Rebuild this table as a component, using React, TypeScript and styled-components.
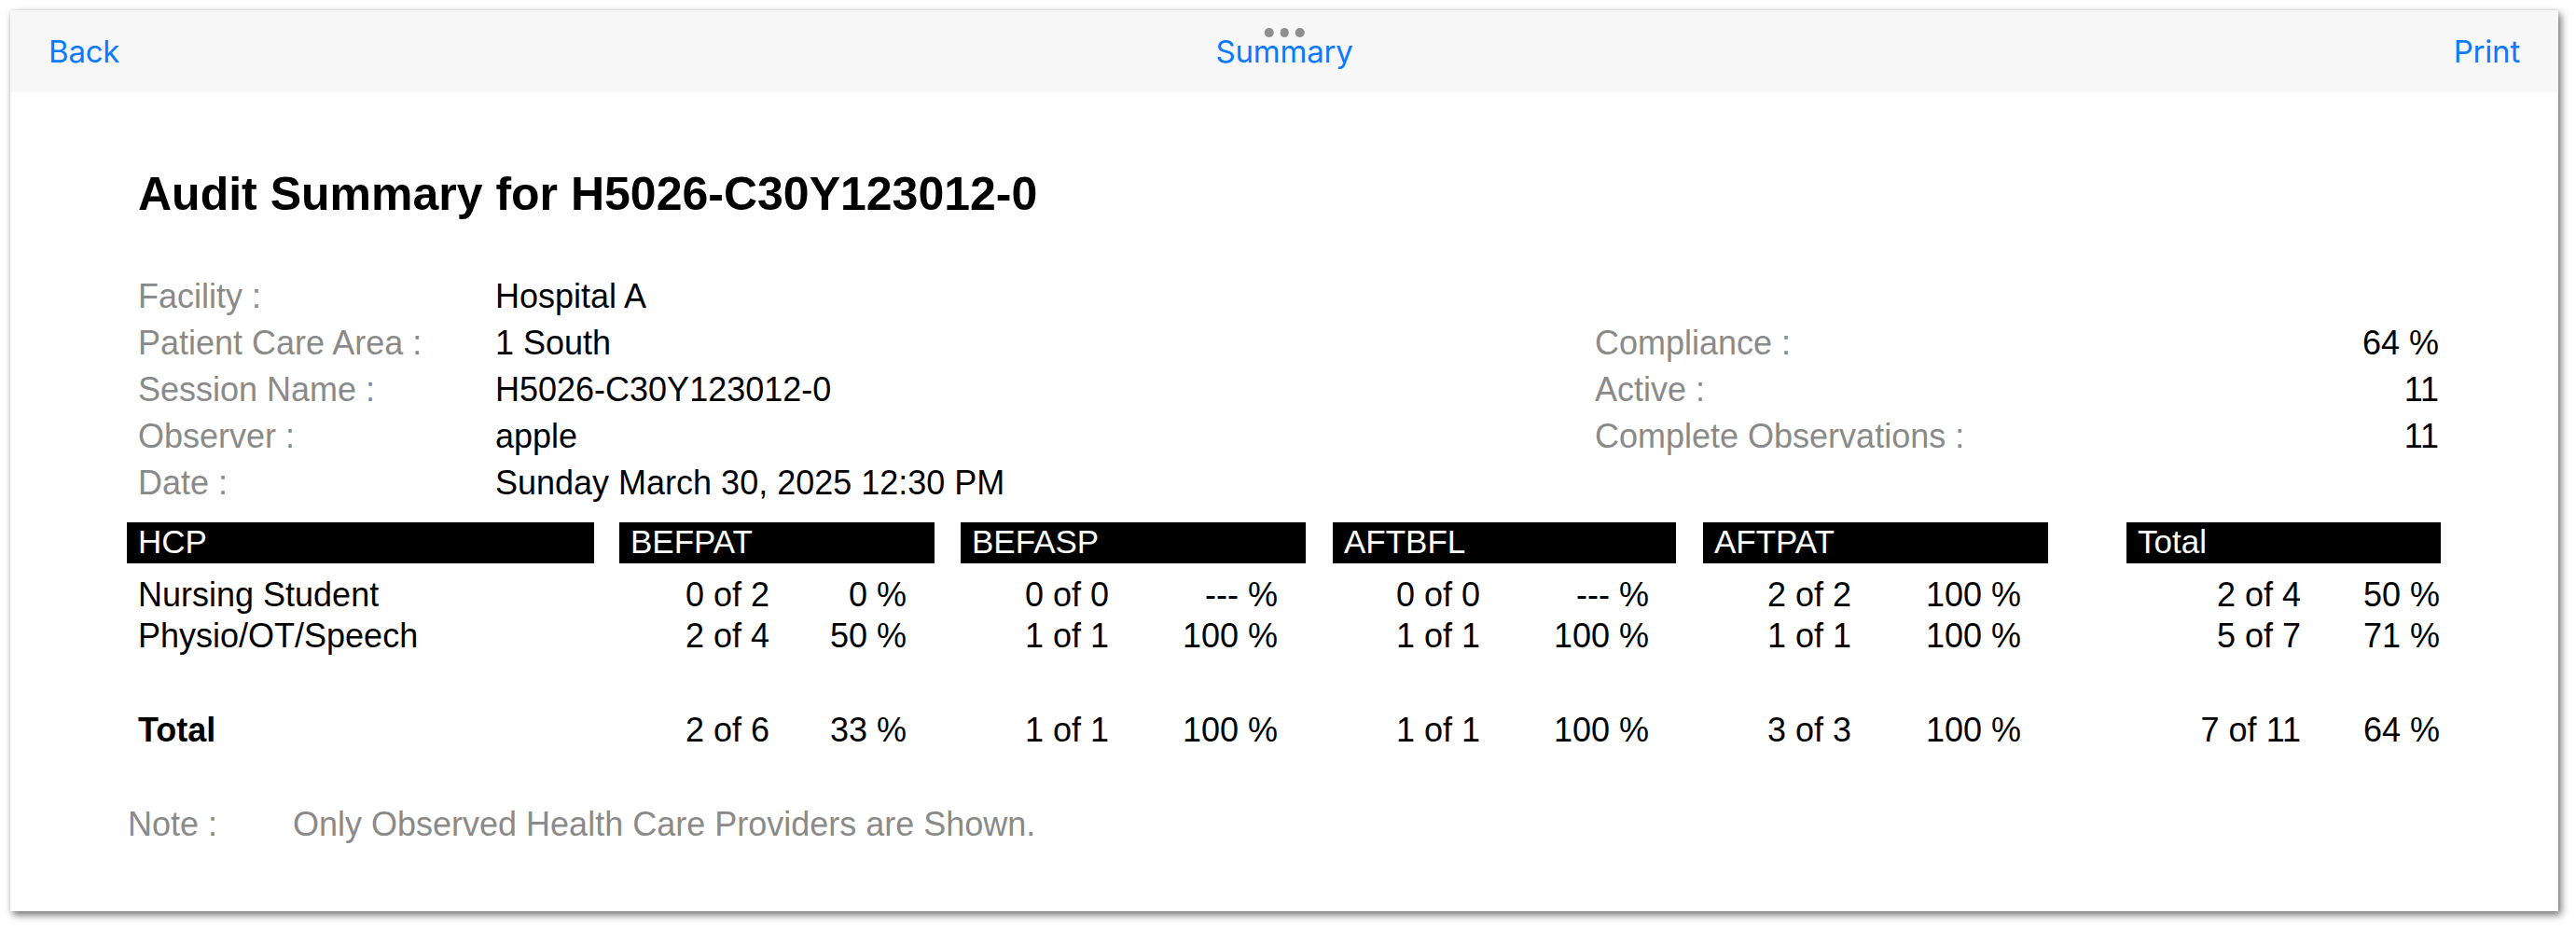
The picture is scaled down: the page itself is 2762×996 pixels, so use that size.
import React from "react";
import styled, { createGlobalStyle } from "styled-components";

const GlobalStyle = createGlobalStyle`
  html, body {
    margin: 0;
    padding: 0;
    background: #ffffff;
  }
  body {
    font-family: "Liberation Sans", Arial, sans-serif;
  }
`;

const Page = styled.div`
  box-sizing: border-box;
  min-height: 996px;
  padding: 11px 0 19px 11px;
`;

const Window = styled.div`
  position: relative;
  width: 2732px;
  height: 966px;
  background: #ffffff;
  box-shadow: 3px 4px 8px rgba(0, 0, 0, 0.55), 0 0 3px rgba(0, 0, 0, 0.12);
  display: flex;
  flex-direction: column;
`;

const NavBar = styled.div`
  height: 88px;
  flex: none;
  background: #f6f7f6;
  display: grid;
  grid-template-columns: 1fr auto 1fr;
  align-items: center;
  padding: 0 41px 0 41px;
  font-family: Inter, "Noto Sans", sans-serif;
  font-size: 33px;
  color: #0a7aff;
`;

const NavButton = styled.span<{ $align: "left" | "center" | "right" }>`
  justify-self: ${(p) => (p.$align === "left" ? "start" : p.$align === "right" ? "end" : "center")};
  letter-spacing: -0.2px;
`;

const Grabber = styled.div`
  position: absolute;
  top: 19px;
  left: 50%;
  transform: translateX(-50%);
  display: flex;
  gap: 7px;
`;

const Dot = styled.span`
  width: 9.5px;
  height: 9.5px;
  border-radius: 50%;
  background: #8f8f8f;
`;

const Content = styled.div`
  padding: 80px 126px 0 125px;
  color: #000;
  font-size: 36px;
`;

const Title = styled.h1`
  margin: 0 0 56px 12px;
  font-size: 50px;
  line-height: 58px;
  font-weight: 700;
`;

const InfoGrid = styled.div`
  display: flex;
  padding: 0 2px 0 12px;
  line-height: 50px;
`;

const InfoColumn = styled.div<{ $width?: number; $offset?: number }>`
  ${(p) => (p.$width ? `width: ${p.$width}px; flex: none;` : "flex: 1;")}
  margin-top: ${(p) => p.$offset ?? 0}px;
  display: flex;
  flex-direction: column;
`;

const InfoRow = styled.div<{ $labelWidth?: number }>`
  display: flex;
  justify-content: ${(p) => (p.$labelWidth ? "flex-start" : "space-between")};
`;

const Label = styled.span<{ $width?: number }>`
  color: #8a8a8a;
  ${(p) => (p.$width ? `width: ${p.$width}px; flex: none;` : "")}
`;

const Value = styled.span`
  color: #000;
`;

const TableRow = styled.div<{ $mt: number; $bold?: boolean }>`
  display: flex;
  margin-top: ${(p) => p.$mt}px;
  height: 44px;
  line-height: 44px;
  font-weight: ${(p) => (p.$bold ? 700 : 400)};
`;

const HeaderCell = styled.div<{ $w: number; $ml: number }>`
  width: ${(p) => p.$w}px;
  margin-left: ${(p) => p.$ml}px;
  flex: none;
  background: #000;
  color: #fff;
  font-size: 35px;
  line-height: 42px;
  padding-left: 12px;
  box-sizing: border-box;
`;

const NameCell = styled.div<{ $w: number }>`
  width: ${(p) => p.$w}px;
  flex: none;
  padding-left: 12px;
  box-sizing: border-box;
`;

const GroupCell = styled.div<{ $w: number; $ml: number; $pr: number }>`
  width: ${(p) => p.$w}px;
  margin-left: ${(p) => p.$ml}px;
  padding-right: ${(p) => p.$pr}px;
  box-sizing: border-box;
  flex: none;
  display: flex;
  font-weight: 400;
`;

const CountText = styled.span<{ $w: number }>`
  width: ${(p) => p.$w}px;
  flex: none;
  text-align: right;
`;

const PctText = styled.span`
  flex: 1;
  text-align: right;
`;

const NoteRow = styled.div`
  display: flex;
  margin-top: 57px;
  padding-left: 1px;
  line-height: 44px;
  color: #8a8a8a;
`;

const NoteLabel = styled.span`
  width: 177px;
  flex: none;
`;

type Col = { key: string; w: number; gap: number; count: number; pr: number };

const cols: Col[] = [
  { key: "BEFPAT", w: 338, gap: 27, count: 161, pr: 30 },
  { key: "BEFASP", w: 370, gap: 28, count: 159, pr: 30 },
  { key: "AFTBFL", w: 368, gap: 29, count: 158, pr: 29 },
  { key: "AFTPAT", w: 370, gap: 29, count: 159, pr: 29 },
  { key: "Total", w: 337, gap: 84, count: 187, pr: 1 },
];

const HCP_WIDTH = 501;

type Row = { name: string; values: [string, string][]; bold?: boolean; mt: number };

const rows: Row[] = [
  {
    name: "Nursing Student",
    mt: 12.5,
    values: [
      ["0 of 2", "0 %"],
      ["0 of 0", "--- %"],
      ["0 of 0", "--- %"],
      ["2 of 2", "100 %"],
      ["2 of 4", "50 %"],
    ],
  },
  {
    name: "Physio/OT/Speech",
    mt: 0,
    values: [
      ["2 of 4", "50 %"],
      ["1 of 1", "100 %"],
      ["1 of 1", "100 %"],
      ["1 of 1", "100 %"],
      ["5 of 7", "71 %"],
    ],
  },
  {
    name: "Total",
    mt: 57,
    bold: true,
    values: [
      ["2 of 6", "33 %"],
      ["1 of 1", "100 %"],
      ["1 of 1", "100 %"],
      ["3 of 3", "100 %"],
      ["7 of 11", "64 %"],
    ],
  },
];

const leftInfo: [string, string][] = [
  ["Facility :", "Hospital A"],
  ["Patient Care Area :", "1 South"],
  ["Session Name :", "H5026-C30Y123012-0"],
  ["Observer :", "apple"],
  ["Date :", "Sunday March 30, 2025 12:30 PM"],
];

const rightInfo: [string, string][] = [
  ["Compliance :", "64 %"],
  ["Active :", "11"],
  ["Complete Observations :", "11"],
];

export default function App() {
  return (
    <Page>
      <GlobalStyle />
      <Window>
        <Grabber>
          <Dot />
          <Dot />
          <Dot />
        </Grabber>
        <NavBar>
          <NavButton $align="left">Back</NavButton>
          <NavButton $align="center">Summary</NavButton>
          <NavButton $align="right">Print</NavButton>
        </NavBar>
        <Content>
          <Title>Audit Summary for H5026-C30Y123012-0</Title>
          <InfoGrid>
            <InfoColumn>
              {leftInfo.map(([l, v]) => (
                <InfoRow key={l} $labelWidth={383}>
                  <Label $width={383}>{l}</Label>
                  <Value>{v}</Value>
                </InfoRow>
              ))}
            </InfoColumn>
            <InfoColumn $width={905} $offset={50}>
              {rightInfo.map(([l, v]) => (
                <InfoRow key={l}>
                  <Label>{l}</Label>
                  <Value>{v}</Value>
                </InfoRow>
              ))}
            </InfoColumn>
          </InfoGrid>

          <TableRow $mt={16.5}>
            <HeaderCell $w={HCP_WIDTH} $ml={0}>HCP</HeaderCell>
            {cols.map((c) => (
              <HeaderCell key={c.key} $w={c.w} $ml={c.gap}>
                {c.key}
              </HeaderCell>
            ))}
          </TableRow>

          {rows.map((r) => (
            <TableRow key={r.name} $mt={r.mt} $bold={r.bold}>
              <NameCell $w={HCP_WIDTH}>{r.name}</NameCell>
              {cols.map((c, i) => (
                <GroupCell key={c.key} $w={c.w} $ml={c.gap} $pr={c.pr}>
                  <CountText $w={c.count}>{r.values[i][0]}</CountText>
                  <PctText>{r.values[i][1]}</PctText>
                </GroupCell>
              ))}
            </TableRow>
          ))}

          <NoteRow>
            <NoteLabel>Note :</NoteLabel>
            <span>Only Observed Health Care Providers are Shown.</span>
          </NoteRow>
        </Content>
      </Window>
    </Page>
  );
}
